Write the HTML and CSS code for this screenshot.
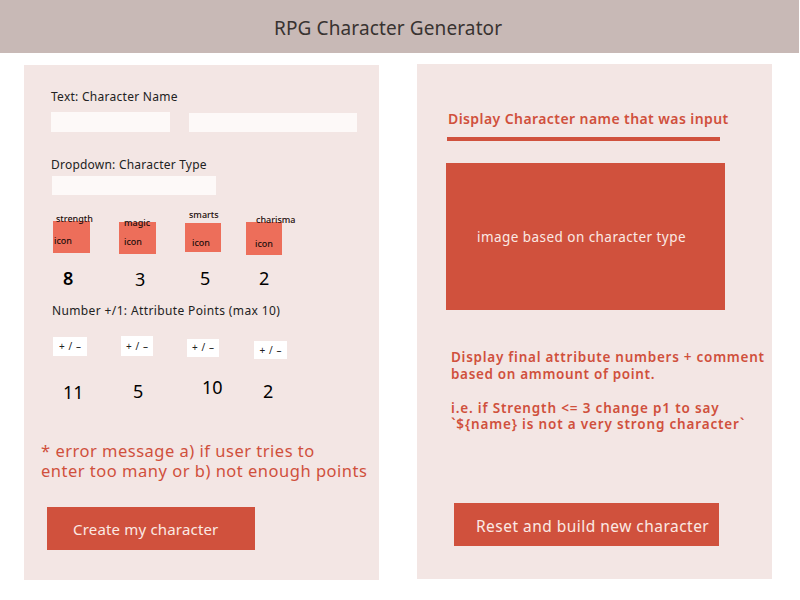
FILE: index.html
```html
<!DOCTYPE html>
<html lang="en">
<head>
<meta charset="utf-8">
<title>RPG Character Generator</title>
<link rel="stylesheet" href="styles.css">
</head>
<body>
<header class="header"><h1 class="title">RPG Character Generator</h1></header>
<main class="panels">
  <section class="panel form">
    <div class="label name-label">Text: Character Name</div>
    <div class="inputs"><div class="input first"></div><div class="input last"></div></div>
    <div class="label type-label">Dropdown: Character Type</div>
    <div class="select"></div>
    <div class="icons">
      <div class="icon strength"><span class="caption">strength</span><span class="word">icon</span></div>
      <div class="icon magic"><span class="caption">magic</span><span class="word">icon</span></div>
      <div class="icon smarts"><span class="caption">smarts</span><span class="word">icon</span></div>
      <div class="icon charisma"><span class="caption">charisma</span><span class="word">icon</span></div>
    </div>
    <div class="numbers base"><span class="strong">8</span><span>3</span><span>5</span><span>2</span></div>
    <div class="label points-label">Number +/1: Attribute Points (max 10)</div>
    <div class="steppers">
      <div class="stepper">+ / –</div><div class="stepper">+ / –</div><div class="stepper">+ / –</div><div class="stepper">+ / –</div>
    </div>
    <div class="numbers total"><span>11</span><span>5</span><span>10</span><span>2</span></div>
    <p class="error">* error message a) if user tries to<br>enter too many or b) not enough points</p>
    <div class="button create">Create my character</div>
  </section>
  <section class="panel result">
    <h2 class="name">Display Character name that was input</h2>
    <div class="rule"></div>
    <div class="portrait">image based on character type</div>
    <div class="summary">
      <div class="line l1">Display final attribute numbers + comment</div>
      <div class="line l2">based on ammount of point.</div>
      <div class="line l3">i.e. if Strength &lt;= 3 change p1 to say</div>
      <div class="line l4">`${name} is not a very strong character`</div>
    </div>
    <div class="button reset">Reset and build new character</div>
  </section>
</main>
</body>
</html>
```
FILE: styles.css
```css
* { box-sizing: border-box; }
body {
  margin: 0;
  width: 800px;
  height: 600px;
  overflow: hidden;
  background: #fff;
  color: #222;
  font-family: "Noto Sans", sans-serif;
  white-space: nowrap;
}
h1, h2, p { margin: 0; }

.header { width: 799px; height: 53px; background: #c8b9b6; padding: 14px 0 0 274px; }
.title { font-size: 19px; font-weight: 400; line-height: 28px; color: #383331; letter-spacing: 0.12px; }

.panels { display: flex; gap: 38px; padding-left: 24px; }
.panel { width: 355px; height: 515px; background: #f3e6e4; }
.form { margin-top: 12px; padding-top: 23px; }
.result { margin-top: 11px; padding-top: 45px; }

.label { font-size: 12px; line-height: 18px; height: 18px; margin-left: 27px; letter-spacing: 0.27px; }
.inputs { display: flex; align-items: flex-end; gap: 19px; height: 20px; margin: 6px 0 0 27px; }
.input, .select { background: #fdf9f8; }
.first { width: 119px; height: 20px; }
.last { width: 168px; height: 19px; }
.type-label { margin-top: 24px; letter-spacing: 0.22px; }
.select { width: 164px; height: 19px; margin: 2px 0 0 28px; }

.icons { display: flex; align-items: flex-start; height: 34px; margin: 26px 0 0 29px; color: #1c0d0a; font-size: 9px; font-weight: 500; line-height: 12px; }
.icon { position: relative; background: #ed6e5a; }
.caption, .word { position: absolute; }
.strength { width: 37px; height: 32px; }
.magic { width: 37px; height: 32px; margin: 1px 0 0 29px; }
.smarts { width: 36px; height: 29px; margin: 2px 0 0 29px; }
.charisma { width: 36px; height: 33px; margin: 1px 0 0 25px; }
.strength .caption { left: 3px; top: -8px; }
.strength .word { left: 1px; top: 14px; }
.magic .caption { left: 5px; top: -5px; }
.magic .word { left: 5px; top: 14px; }
.smarts .caption { left: 4px; top: -14px; }
.smarts .word { left: 7px; top: 14px; }
.charisma .caption { left: 10px; top: -8px; }
.charisma .word { left: 9px; top: 16px; }

.numbers { display: grid; height: 26px; color: #000; font-size: 18px; line-height: 24px; }
.base { grid-template-columns: 72px 65px 59px auto; margin: 11px 0 0 39px; }
.base span:nth-child(2) { margin-top: 1px; }
.strong { font-weight: 600; }
.points-label { margin-top: 10px; margin-left: 28px; letter-spacing: 0.37px; }

.steppers { display: flex; align-items: flex-start; height: 24px; margin: 16px 0 0 29px; font-size: 10px; line-height: 18px; text-align: center; word-spacing: 1.2px; }
.stepper { background: #fff; }
.stepper:nth-child(1) { width: 34px; height: 19px; margin-top: 1px; }
.stepper:nth-child(2) { width: 32px; height: 20px; margin-left: 34px; line-height: 20px; }
.stepper:nth-child(3) { width: 32px; height: 18px; margin: 3px 0 0 34px; line-height: 17px; }
.stepper:nth-child(4) { width: 33px; height: 18px; margin: 5px 0 0 35px; }

.numbers.total { grid-template-columns: 70px 69px 61px auto; height: 28px; margin: 15px 0 0 39px; }
.total span { margin-top: 4px; }
.total span:nth-child(1) { margin-top: 5px; }
.total span:nth-child(3) { margin-top: 0; }

.error { margin: 38px 0 0 17px; height: 40px; color: #d0503c; font-size: 16.5px; line-height: 20px; letter-spacing: 0.5px; }
.button { color: #fbe9e4; background: #d0513d; height: 43px; line-height: 45px; }
.create { width: 208px; margin: 26px 0 0 23px; padding-left: 26px; font-size: 15px; letter-spacing: 0.18px; }

.name { margin-left: 31px; font-size: 14px; line-height: 20px; font-weight: 600; letter-spacing: 0.42px; color: #d0503c; }
.rule { width: 273px; height: 4px; margin: 8px 0 0 30px; background: #d0513d; }
.portrait { width: 279px; height: 147px; margin: 22px 0 0 29px; padding-left: 31px; background: #d0513d; color: #fbe9e4; font-size: 13.5px; line-height: 149px; letter-spacing: 0.45px; }
.summary { margin: 38px 0 0 34px; height: 86px; color: #d0503c; font-size: 13.5px; font-weight: 600; }
.line { height: 17px; line-height: 18px; }
.l1 { letter-spacing: 0.74px; }
.l2 { letter-spacing: 0.66px; }
.l3 { margin-top: 17px; letter-spacing: 0.83px; }
.l4 { margin-top: -1px; letter-spacing: 0.83px; }
.reset { width: 265px; margin: 69px 0 0 37px; padding-left: 22px; font-size: 15.5px; line-height: 47px; letter-spacing: 0.47px; }
```
